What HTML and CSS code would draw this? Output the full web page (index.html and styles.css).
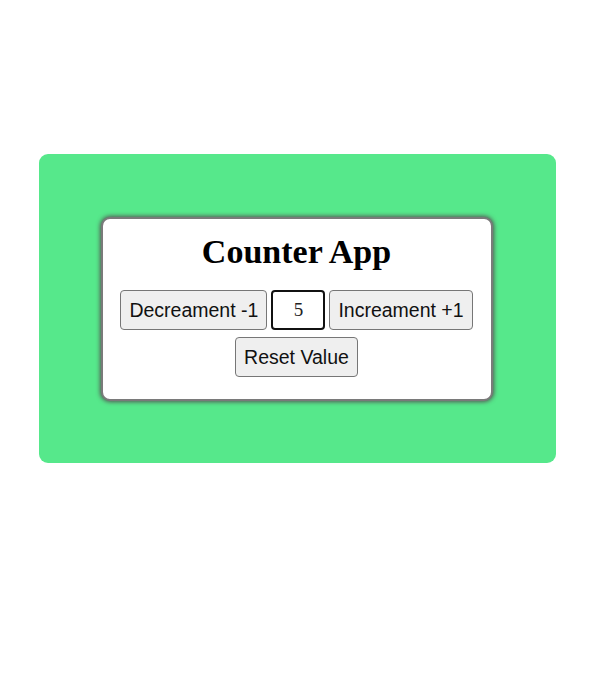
FILE: index.html
```
<!DOCTYPE html>
<html>
<head>
<meta charset="utf-8">
<link rel="stylesheet" href="styles.css">
</head>
<body>
<div class="outer">
  <div class="card">
    <h1 class="title">Counter App</h1>
    <div class="row">
      <button class="btn">Decreament -1</button>
      <input class="value" type="text" value="5">
      <button class="btn">Increament +1</button>
    </div>
    <div class="row">
      <button class="btn">Reset Value</button>
    </div>
  </div>
</div>
</body>
</html>
```

FILE: styles.css
```
html, body {
  margin: 0;
  padding: 0;
  background: #ffffff;
}
body {
  font-family: "Liberation Serif", "Times New Roman", serif;
}
.outer {
  width: 517px;
  height: 309px;
  margin: 154px auto 0;
  background: #56e88b;
  border-radius: 9px;
  display: flex;
  align-items: center;
  justify-content: center;
  box-sizing: border-box;
}
.card {
  width: 392px;
  box-sizing: border-box;
  background: #ffffff;
  border: 2px solid #7a7a7a;
  border-radius: 9px;
  box-shadow: 0 0 4px 1px #555555;
  padding: 13px 0 22px;
  display: flex;
  flex-direction: column;
  align-items: center;
  gap: 7px;
  margin-left: -1px;
}
.title {
  margin: 0 0 11px;
  font-size: 34px;
  line-height: 40px;
  font-weight: bold;
  color: #000;
}
.row {
  display: flex;
  gap: 4px;
  justify-content: center;
}
.btn {
  font-family: "Liberation Sans", Arial, sans-serif;
  font-size: 19.5px;
  line-height: 22px;
  padding: 8px 8px;
  background: #efefef;
  border: 1px solid #767676;
  border-radius: 4px;
  color: #111;
}
.value {
  width: 54px;
  height: 40px;
  box-sizing: border-box;
  border: 2px solid #111;
  border-radius: 4px;
  text-align: center;
  font-family: "Liberation Serif", "Times New Roman", serif;
  font-size: 19px;
  color: #222;
  padding: 0;
  background: #fff;
}
```
